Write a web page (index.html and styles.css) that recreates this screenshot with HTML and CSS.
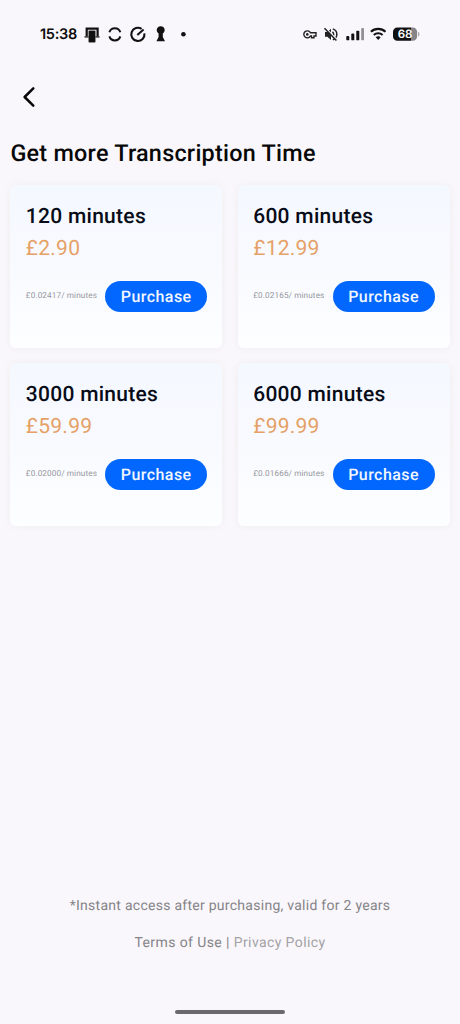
FILE: index.html
```html
<!DOCTYPE html>
<html lang="en">
<head>
<meta charset="utf-8">
<title>Get more Transcription Time</title>
<link rel="stylesheet" href="styles.css">
</head>
<body>
<div class="screen">
  <header class="status">
    <span class="clock">15:38</span>
    <svg class="status-left" width="104" height="20" viewBox="84 24 104 20">
      <path d="M86.7 36V28.6H97.6V36" fill="none" stroke="#111" stroke-width="2.2"/>
      <path d="M84.5 36.9H99.5" stroke="#111" stroke-width="1.3"/>
      <rect x="88.5" y="30.4" width="7" height="12.2" rx="1" fill="#111" stroke="#aaa" stroke-width=".4"/>
      <path d="M109.4 32.2A5.7 5.7 0 0 1 120.3 32.2M109.4 36.4A5.7 5.7 0 0 0 120.3 36.4" fill="none" stroke="#111" stroke-width="2"/>
      <path d="M141.6 28.9A6.6 6.6 0 1 0 144.4 33.4" fill="none" stroke="#111" stroke-width="2.1"/>
      <path d="M137.3 35L143.6 29.6" stroke="#111" stroke-width="2"/>
      <path d="M158.6 33.6A4 4 0 1 1 162.8 33.6V37L165 41.3H156.4L158.6 37Z" fill="#111"/>
      <circle cx="183.4" cy="34.3" r="2.3" fill="#111"/>
    </svg>
    <svg class="status-right" width="118" height="20" viewBox="302 24 118 20">
      <path d="M310.4 32.7A3.5 3.5 0 1 0 310.4 36H311.5V37.8H314V36H316V32.7Z" fill="none" stroke="#222" stroke-width="1.4"/>
      <circle cx="307.3" cy="34.4" r="1.3" fill="#222"/>
      <path d="M325 32H327.4L331 28.8V40L327.4 36.8H325Z" fill="#222"/>
      <path d="M332.5 31.7Q334.8 34.4 332.5 37M332.8 28.9A5.7 5.7 0 0 1 332.8 39.8" fill="none" stroke="#222" stroke-width="1.5"/>
      <path d="M325.3 27.7L337.2 40" stroke="#f9f8fc" stroke-width="1.6"/>
      <path d="M324.5 28.3L336.4 40.6" stroke="#222" stroke-width="1.5"/>
      <g fill="#111"><rect x="346.3" y="36" width="3" height="4.3" rx=".9"/><rect x="351.3" y="33.6" width="3" height="6.7" rx=".9"/><rect x="356.3" y="30.7" width="3" height="9.6" rx=".9"/></g>
      <rect x="361.2" y="28" width="2.8" height="12.3" rx=".9" fill="#919095"/>
      <path d="M370.9 31.8A10.5 10.5 0 0 1 385.5 31.8M373.8 35A6.4 6.4 0 0 1 382.6 35" fill="none" stroke="#111" stroke-width="2.1"/>
      <path d="M375.7 37.3A3.7 3.7 0 0 1 380.7 37.3L378.2 40.1Z" fill="#111"/>
      <path d="M397.3 27.5H411V40.8H397.3A4.3 4.3 0 0 1 393 36.5V31.8A4.3 4.3 0 0 1 397.3 27.5Z" fill="#111"/>
      <path d="M411 27.5H412.8A4.3 4.3 0 0 1 417.1 31.8V36.5A4.3 4.3 0 0 1 412.8 40.8H411Z" fill="#858489"/>
      <path d="M418 31.7Q419.5 32 419.5 34.1Q419.5 36.3 418 36.7Z" fill="#aaa9ad"/>
      <text class="battery-level" x="405" y="38.3" text-anchor="middle">68</text>
    </svg>
  </header>

  <nav class="nav">
    <svg width="14" height="22" viewBox="0 0 14 22"><path d="M11.3 2.4L2.6 11L11.3 19.6" fill="none" stroke="#080808" stroke-width="2.5" stroke-linecap="round" stroke-linejoin="round"/></svg>
  </nav>

  <h1 class="title">Get more Transcription Time</h1>

  <main class="plans">
    <section class="card">
      <h2 class="name">120 minutes</h2>
      <p class="price">£2.90</p>
      <div class="row"><span class="rate">£0.02417/ minutes</span><button class="buy">Purchase</button></div>
    </section>
    <section class="card">
      <h2 class="name">600 minutes</h2>
      <p class="price">£12.99</p>
      <div class="row"><span class="rate">£0.02165/ minutes</span><button class="buy">Purchase</button></div>
    </section>
    <section class="card">
      <h2 class="name">3000 minutes</h2>
      <p class="price">£59.99</p>
      <div class="row"><span class="rate">£0.02000/ minutes</span><button class="buy">Purchase</button></div>
    </section>
    <section class="card">
      <h2 class="name">6000 minutes</h2>
      <p class="price">£99.99</p>
      <div class="row"><span class="rate">£0.01666/ minutes</span><button class="buy">Purchase</button></div>
    </section>
  </main>

  <footer class="footer">
    <p class="note">*Instant access after purchasing, valid for 2 years</p>
    <p class="links"><span class="terms">Terms of Use | </span><span class="privacy">Privacy Policy</span></p>
    <div class="home-bar"></div>
  </footer>
</div>
</body>
</html>
```
FILE: styles.css
```css
* { box-sizing: border-box; margin: 0; padding: 0; }
body { background: #f9f7fb; font-family: Roboto, "Liberation Sans", sans-serif; text-rendering: geometricPrecision; }
.screen { width: 460px; height: 1024px; display: flex; flex-direction: column; overflow: hidden; }

.status { height: 68px; padding: 0 40px; display: flex; align-items: center; }
.clock { width: 44px; padding-top: 1px; font: 600 14.5px/20px Inter, Roboto, sans-serif; color: #0c0c0c; white-space: nowrap; letter-spacing: -0.3px; }
.status-right { margin-left: auto; }
.battery-level { font: 600 11.5px Inter, Roboto, sans-serif; fill: #fff; }

.nav { height: 58px; padding: 0 22px; display: flex; align-items: center; }
.title { height: 54px; padding-left: 10.4px; font-size: 23.4px; line-height: 54px; font-weight: 500; letter-spacing: 0.25px; color: #080808; white-space: nowrap; }

.plans { margin-top: 5px; padding: 0 10.3px; display: grid; grid-template-columns: 211.9px 211.9px; grid-auto-rows: 163px; column-gap: 15.5px; row-gap: 15.4px; }
.card { padding: 18px 15px 0 15.5px; border-radius: 6px; background: linear-gradient(#f4f8ff, #f9faff 50%, #fcfeff); box-shadow: 0 0 8px rgba(90, 50, 50, 0.045); }
.name { font-size: 21px; line-height: 28px; font-weight: 500; letter-spacing: 0.28px; color: #080c18; }
.price { margin-top: 3px; font-size: 21px; line-height: 30px; letter-spacing: 0.25px; color: #e5a167; }
.row { margin-top: 16.6px; display: flex; align-items: center; justify-content: space-between; }
.rate { font-size: 8.2px; line-height: 10px; letter-spacing: 0.11px; color: #96979d; white-space: nowrap; }
.buy { width: 102px; height: 31px; border: 0; border-radius: 16px; background: #0267ff; color: #f2f7ff; font: 500 16px/31px Roboto, sans-serif; letter-spacing: 0.45px; text-rendering: inherit; }

.footer { margin-top: auto; height: 129px; display: flex; flex-direction: column; align-items: center; }
.note, .links { font-size: 14px; line-height: 22px; letter-spacing: 0.4px; color: #858488; white-space: pre; }
.note { letter-spacing: 0.27px; }
.links { margin-top: 15px; }
.privacy { color: #a3a2a6; }
.home-bar { width: 110px; height: 4px; margin-top: 56px; border-radius: 2px; background: #6b696d; }
```
